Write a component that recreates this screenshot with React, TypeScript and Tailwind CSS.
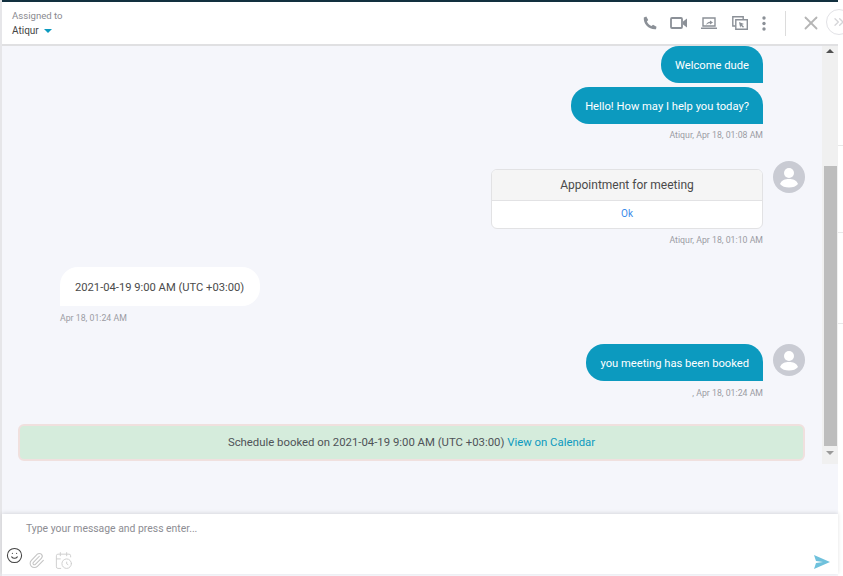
import { X, Smile, Paperclip, CalendarClock, ChevronsRight } from "lucide-react";

function Avatar() {
  return (
    <div className="w-8 h-8 rounded-full bg-[#c9cbd3] shrink-0 flex items-center justify-center overflow-hidden">
      <svg width="32" height="32" viewBox="0 0 32 32">
        <circle cx="16" cy="12" r="5" fill="#fff" />
        <path d="M7 23c1.500-4 5-5 9-5s7.500 1 9 5c-2 2.500-5 3.500-9 3.500S9 25.500 7 23z" fill="#fff" />
      </svg>
    </div>
  );
}

function Stamp({ children }: { children: React.ReactNode }) {
  return <div className="text-[8.75px] leading-3 text-[#9b9ca3] text-right">{children}</div>;
}

function Bubble({ children }: { children: React.ReactNode }) {
  return (
    <div className="bg-[#0c9abf] text-white text-[11.2px] leading-[39px] h-[37px] px-[14px] rounded-[18px] rounded-br-none whitespace-nowrap">
      {children}
    </div>
  );
}

export default function App() {
  return (
    <div className="w-[843px] h-[576px] bg-white overflow-hidden flex font-['Roboto',sans-serif] text-[#4a4a4a]">
      <div className="w-[838px] h-full flex flex-col border-l-2 border-[#e6e6e9] bg-[#f5f6fb] shrink-0">
        <div className="relative h-[46px] shrink-0 bg-white border-t-2 border-t-[#12303f] border-b-2 border-b-[#e0e0e2] flex items-center pl-[10px]">
          <div className="flex-1">
            <div className="text-[9.6px] leading-3 text-[#8a8a90] mt-[1px]">Assigned to</div>
            <div className="text-[10px] leading-3 mt-[3px] text-[#444] flex items-center gap-[5px]">
              Atiqur
              <span className="w-0 h-0 border-x-[4px] border-x-transparent border-t-[4px] border-t-[#0c9abf]" />
            </div>
          </div>
          <div className="flex items-center text-[#8b9097] mr-[16px]">
            <svg width="14" height="14" viewBox="0 0 14 14">
              <path d="M.800 1.500 3.300.500 5.200 4 3.900 5.500C4.800 7.500 6.400 9.100 8.500 10.100L10 8.800 13.500 10.700 13 13.200C6 13.800.200 8.200.800 1.500z" fill="#8b9097" />
            </svg>
            <svg width="17" height="12" viewBox="0 0 17 12" className="ml-[13px]">
              <rect x="1" y="1" width="11" height="10" rx="1" fill="none" stroke="#8b9097" strokeWidth="1.800" />
              <path d="M13 4.500 17 1.500v9L13 7.500z" fill="#8b9097" />
            </svg>
            <svg width="16" height="12" viewBox="0 0 16 12" className="ml-[14px]">
              <path d="M2 1h12v8H2z" fill="none" stroke="#8b9097" strokeWidth="1.400" />
              <path d="M0 10.500h16V12H0zM5 8c.5-2 2-3 4-3.200V3.500L12 5.500 9 7.500V6.300C7.500 6.300 6 6.800 5 8z" fill="#8b9097" />
            </svg>
            <svg width="16" height="14" viewBox="0 0 16 14" className="ml-[15px]">
              <path d="M3.500 10H.800V.800h10.400V3.500" fill="none" stroke="#8b9097" strokeWidth="1.400" />
              <path d="M3.800 3.800h11.500v9.500H3.800z" fill="none" stroke="#8b9097" strokeWidth="1.400" />
              <path d="M7 6l5 2-2 .8 2 2-1 1-2-2-.8 2z" fill="#8b9097" />
            </svg>
            <svg width="4" height="15" viewBox="0 0 4 15" className="ml-[14px]">
              <circle cx="2" cy="2" r="1.700" fill="#8b9097" />
              <circle cx="2" cy="7.500" r="1.700" fill="#8b9097" />
              <circle cx="2" cy="13" r="1.700" fill="#8b9097" />
            </svg>
            <div className="ml-[19px] w-px h-[25px] bg-[#dcdcdc]" />
            <X size={22} className="ml-[14px] text-[#b5b5b5]" strokeWidth={2} />
          </div>
          <div className="absolute left-[824px] top-[7px] w-[26px] h-[26px] rounded-full bg-white border border-[#e2e2e6] flex items-center justify-center z-10">
            <ChevronsRight size={16} className="text-[#d5d5d8]" />
          </div>
        </div>
        <div className="flex-1 flex min-h-0">
          <div className="flex-1 min-w-0 pl-4 flex flex-col">
            <div className="mr-[59px] flex flex-col items-end gap-1">
              <Bubble>Welcome dude</Bubble>
              <Bubble>Hello! How may I help you today?</Bubble>
            </div>
            <div className="mr-[59px] mt-[5px]"><Stamp>Atiqur, Apr 18, 01:08 AM</Stamp></div>
            <div className="mt-[20px] flex justify-end mr-[17px] gap-[10px] items-start">
              <div className="w-[272px] mt-2 bg-white border border-[#e2e2e4] rounded-[6px] overflow-hidden">
                <div className="h-[31px] bg-[#f5f5f5] border-b border-[#e2e2e4] text-xs leading-[30px] text-center text-[#4a4a4a]">Appointment for meeting</div>
                <div className="h-[27px] text-[10px] leading-[26px] text-center text-[#3b8bea]">Ok</div>
              </div>
              <Avatar />
            </div>
            <div className="mr-[59px] mt-[5px]"><Stamp>Atiqur, Apr 18, 01:10 AM</Stamp></div>
            <div className="ml-[42px] mt-[21px] w-[200px] h-[39px] bg-white rounded-[18px] rounded-bl-none text-[11.2px] leading-[41px] px-[15px] text-[#4a4a4a] whitespace-nowrap">2021-04-19 9:00 AM (UTC +03:00)</div>
            <div className="ml-[42px] mt-[6px] text-[8.75px] leading-3 text-[#9b9ca3]">Apr 18, 01:24 AM</div>
            <div className="mt-[20px] flex justify-end mr-[17px] gap-[10px] items-start">
              <Bubble>you meeting has been booked</Bubble>
              <Avatar />
            </div>
            <div className="mr-[59px] mt-[6px]"><Stamp>, Apr 18, 01:24 AM</Stamp></div>
            <div className="mt-[25px] mr-[17px] h-[37px] bg-[#d5ecdc] border-2 border-[#f0e0de] rounded-[6px] text-[11.35px] leading-[33px] text-center text-[#4f5358]">
              Schedule booked on 2021-04-19 9:00 AM (UTC +03:00) <span className="text-[#0c9abf]">View on Calendar</span>
            </div>
          </div>
          <div className="w-4 h-[418px] bg-[#f0f0f0] shrink-0 flex flex-col items-center">
            <span className="mt-[3px] w-0 h-0 border-x-[4px] border-x-transparent border-b-[4px] border-b-[#505050]" />
            <div className="mt-[113px] w-[13px] h-[280px] bg-[#bdbdbd]" />
            <span className="mt-[5px] w-0 h-0 border-x-[4px] border-x-transparent border-t-[4px] border-t-[#9a9a9a]" />
          </div>
        </div>
        <div className="h-[60px] mb-[2px] shrink-0 bg-white shadow-[0_-1px_4px_rgba(0,0,0,0.12)] flex flex-col pl-6 pr-2">
          <div className="text-[10.4px] leading-3 mt-[9px] text-[#8d8d93]">Type your message and press enter...</div>
          <div className="mt-[12px] -ml-[20px] flex items-center">
            <Smile size={17} className="text-[#444] -mt-[6px]" strokeWidth={1.5} />
            <Paperclip size={17} className="ml-[5px] mt-1 text-[#c4c4c4]" strokeWidth={1.5} />
            <CalendarClock size={19} className="ml-[9px] mt-1 text-[#cfcfcf]" strokeWidth={1.25} />
            <svg width="16" height="14" viewBox="0 0 16 14" className="ml-auto mt-[6px]">
              <path d="M0 0l16 7-16 7 2-6 7-1-7-1z" fill="#6fc1dc" />
            </svg>
          </div>
        </div>
      </div>
      <div className="flex-1 h-full">
        <div className="h-[146px] border-b border-[#e8e8e8]" />
        <div className="h-[87px] border-b border-[#e8e8e8]" />
        <div className="h-[91px] border-b border-[#e8e8e8]" />
      </div>
    </div>
  );
}
